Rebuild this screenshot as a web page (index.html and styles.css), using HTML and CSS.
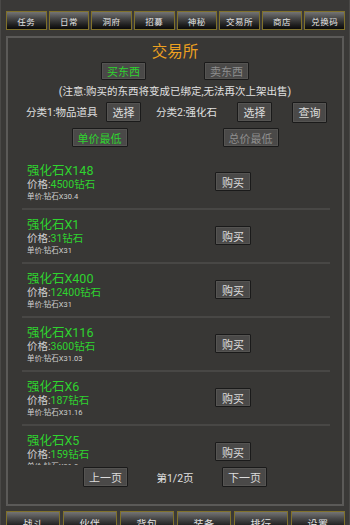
FILE: index.html
```html
<!DOCTYPE html>
<html lang="zh">
<head>
<meta charset="utf-8">
<title>交易所</title>
<link rel="stylesheet" href="styles.css">
</head>
<body>
<div class="screen">
  <nav class="topnav">
    <div class="navbtn">任务</div>
    <div class="navbtn">日常</div>
    <div class="navbtn">洞府</div>
    <div class="navbtn">招募</div>
    <div class="navbtn">神秘</div>
    <div class="navbtn">交易所</div>
    <div class="navbtn">商店</div>
    <div class="navbtn">兑换码</div>
  </nav>
  <main class="panel">
    <h1 class="title">交易所</h1>
    <div class="tabs">
      <div class="btn btn-tab on">买东西</div>
      <div class="btn btn-tab off">卖东西</div>
    </div>
    <p class="note">(注意:购买的东西将变成已绑定,无法再次上架出售)</p>
    <div class="cats">
      <span class="cat-label l1">分类1:物品道具</span>
      <div class="btn btn-sel b1">选择</div>
      <span class="cat-label l2">分类2:强化石</span>
      <div class="btn btn-sel b2">选择</div>
      <div class="btn btn-sel b3">查询</div>
    </div>
    <div class="sorts">
      <div class="btn btn-sort on">单价最低</div>
      <div class="btn btn-sort off">总价最低</div>
    </div>
    <div class="list">
      <div class="item">
        <div class="info">
          <div class="name">强化石X148</div>
          <div class="price">价格:<span class="g">4500钻石</span></div>
          <div class="unit">单价:钻石X30.4</div>
        </div>
        <div class="btn btn-buy">购买</div>
      </div>
      <div class="item">
        <div class="info">
          <div class="name">强化石X1</div>
          <div class="price">价格:<span class="g">31钻石</span></div>
          <div class="unit">单价:钻石X31</div>
        </div>
        <div class="btn btn-buy">购买</div>
      </div>
      <div class="item">
        <div class="info">
          <div class="name">强化石X400</div>
          <div class="price">价格:<span class="g">12400钻石</span></div>
          <div class="unit">单价:钻石X31</div>
        </div>
        <div class="btn btn-buy">购买</div>
      </div>
      <div class="item">
        <div class="info">
          <div class="name">强化石X116</div>
          <div class="price">价格:<span class="g">3600钻石</span></div>
          <div class="unit">单价:钻石X31.03</div>
        </div>
        <div class="btn btn-buy">购买</div>
      </div>
      <div class="item">
        <div class="info">
          <div class="name">强化石X6</div>
          <div class="price">价格:<span class="g">187钻石</span></div>
          <div class="unit">单价:钻石X31.16</div>
        </div>
        <div class="btn btn-buy">购买</div>
      </div>
      <div class="item">
        <div class="info">
          <div class="name">强化石X5</div>
          <div class="price">价格:<span class="g">159钻石</span></div>
          <div class="unit">单价:钻石X31.8</div>
        </div>
        <div class="btn btn-buy">购买</div>
      </div>
    </div>
    <div class="pager">
      <div class="btn btn-page">上一页</div>
      <span class="pageno">第1/2页</span>
      <div class="btn btn-page">下一页</div>
    </div>
  </main>
  <nav class="bottomnav">
    <div class="navbtn">战斗</div>
    <div class="navbtn">伙伴</div>
    <div class="navbtn">背包</div>
    <div class="navbtn">装备</div>
    <div class="navbtn">排行</div>
    <div class="navbtn">设置</div>
  </nav>
</div>
</body>
</html>
```

FILE: styles.css
```css
* { box-sizing: border-box; margin: 0; padding: 0; }
html, body {
  width: 350px;
  height: 525px;
  overflow: hidden;
  background: #3a3937;
}
body {
  font-family: Roboto, "Noto Sans CJK SC", sans-serif;
  color: #d8d8d8;
}
.screen {
  width: 350px;
  height: 525px;
  padding-top: 11px;
  border-left: 1px solid #4a4947;
  border-right: 1px solid #4a4947;
  margin: 0;
  position: relative;
}
.topnav, .bottomnav {
  display: flex;
  padding: 0 4px 0 5px;
}
.topnav { gap: 2px; height: 19px; }
.bottomnav { gap: 3px; height: 20px; margin-top: 5px; }
.navbtn {
  flex: 1;
  border: 1px solid #80712a;
  background: linear-gradient(#747474 0%, #4a4a4a 35%, #202020 75%, #0a0a0a 100%);
  color: #e4e4e4;
  font-size: 8.5px;
  display: flex;
  align-items: center;
  justify-content: center;
  letter-spacing: 0.5px;
}
.bottomnav .navbtn { font-size: 10px; align-items: flex-start; padding-top: 4px; }

.panel {
  margin: 6px 5px 0 5px;
  height: 470px;
  border: 2px solid #5b5a58;
  background: #383735;
  display: flex;
  flex-direction: column;
}
.title {
  margin-top: 5px;
  font-size: 15.5px;
  line-height: 18px;
  font-weight: normal;
  color: #eda020;
  text-align: center;
}
.btn {
  background: #4a4948;
  border: 1px solid #1a1a1a;
  box-shadow: inset 0 0 0 1px #555452;
  color: #dcdcdc;
  font-size: 11px;
  display: flex;
  align-items: center;
  justify-content: center;
  border-radius: 1px;
}
.btn.on { color: #2fd32f; }
.btn.off { color: #8e8e8e; }

.tabs {
  margin-top: 1px;
  display: flex;
  justify-content: center;
  gap: 58px;
}
.btn-tab { width: 45px; height: 18px; }

.note {
  margin-top: 4px;
  font-size: 10.5px;
  line-height: 16px;
  text-align: center;
  color: #e0e0e0;
}
.cats {
  margin-top: 1px;
  display: flex;
  align-items: center;
  padding-left: 18px;
  height: 21px;
}
.cat-label { font-size: 10.5px; color: #e0e0e0; white-space: nowrap; }
.l1 { width: 80px; }
.l2 { width: 81px; }
.btn-sel { width: 35px; height: 20px; font-size: 11px; }
.b1 { margin-right: 15px; }
.b2 { margin-right: 20px; }
.b3 { height: 21px; margin-top: 1px; }

.sorts {
  margin-top: 6px;
  display: flex;
  justify-content: center;
  gap: 95px;
}
.btn-sort { width: 56px; height: 19px; }

.list {
  margin: 9px 12px 0 14px;
  height: 309px;
  overflow: hidden;
}
.item {
  display: flex;
  align-items: center;
  height: 54px;
  border-bottom: 2px solid #484745;
}
.info {
  width: 193px;
  padding-left: 5px;
  padding-top: 1px;
}
.name {
  font-size: 12.5px;
  line-height: 15px;
  color: #2fd32f;
}
.price {
  font-size: 10.5px;
  line-height: 14px;
  color: #d0d0d0;
}
.g { color: #2fd32f; }
.unit {
  font-size: 7.5px;
  line-height: 10px;
  color: #d0d0d0;
}
.btn-buy { width: 36px; height: 19px; font-size: 11px; margin-top: -1px; }

.pager {
  margin-top: 2px;
  display: flex;
  justify-content: center;
  align-items: center;
}
.btn-page { width: 45px; height: 20px; font-size: 11px; }
.pageno {
  width: 94px;
  text-align: center;
  font-size: 10.5px;
  color: #e0e0e0;
}
```
